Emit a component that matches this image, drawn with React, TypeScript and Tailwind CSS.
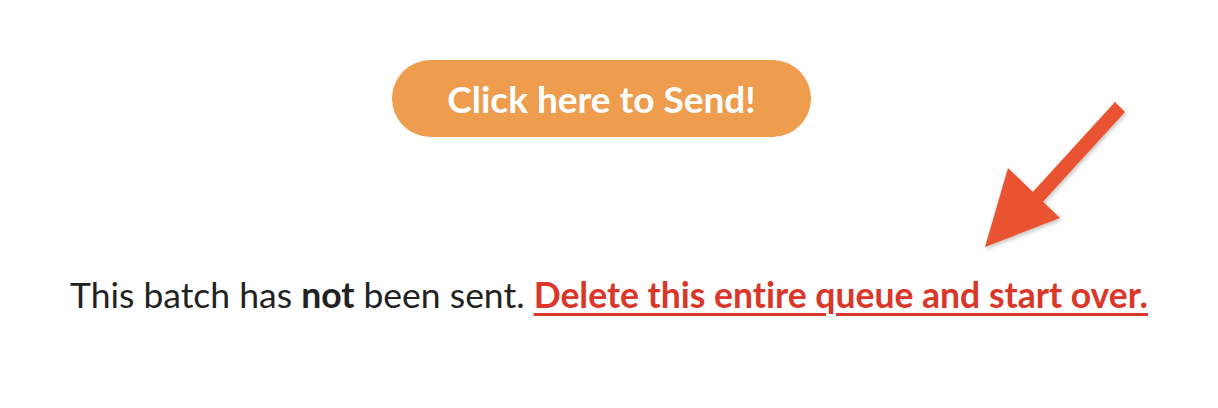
import React from 'react';

export default function App() {
  return (
    <div className="relative w-[1218px] h-[408px] bg-white" style={{ fontFamily: 'Lato, sans-serif' }}>
      <div className="flex flex-col items-center pt-[60px]">
        {/* Send button */}
        <button className="mr-[15px] h-[77px] w-[419px] rounded-full bg-[#ED9D4D] text-white text-[37px] font-bold font-['Lato',sans-serif] [font-variant-ligatures:none]">
          Click here to Send!
        </button>

        {/* Status line */}
        <p className="mt-[136px] text-[35.5px] leading-[44px] text-[#222] [font-variant-ligatures:none]">
          This batch has <span className="font-bold">not</span> been sent.{' '}
          <a href="#" className="font-bold text-[#D9372A] underline decoration-[3px] underline-offset-[5px]">
            Delete this entire queue and start over.
          </a>
        </p>
      </div>

      {/* Arrow pointing at the link */}
      <svg className="absolute left-[975px] top-[95px]" width="165" height="165" viewBox="0 0 165 165">
        <defs>
          <filter id="sh" x="-20%" y="-20%" width="140%" height="140%">
            <feDropShadow dx="1" dy="2" stdDeviation="2" floodColor="#000" floodOpacity="0.25" />
          </filter>
        </defs>
        <g filter="url(#sh)" fill="#EA5330">
          <polygon points="140,7 150,17 65,110 55,100" />
          <polygon points="10,152 33,73 85,123" />
        </g>
      </svg>
    </div>
  );
}
